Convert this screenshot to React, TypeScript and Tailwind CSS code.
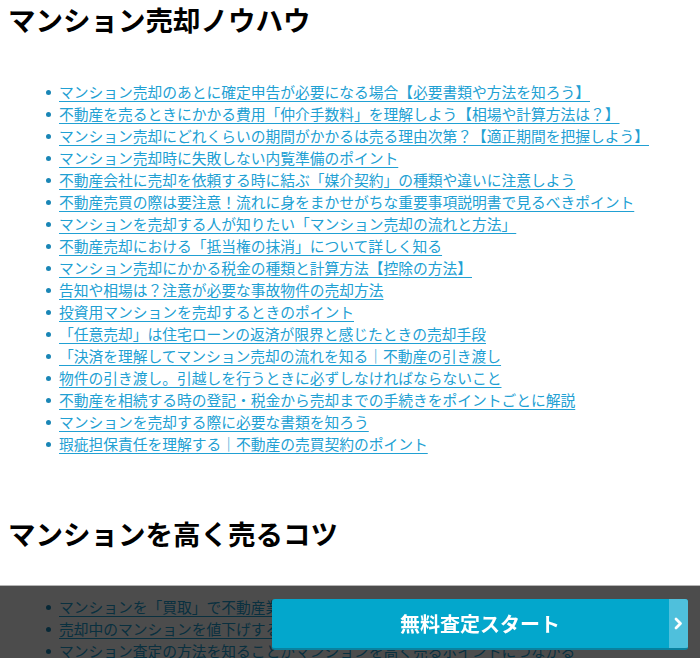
import React from "react";

const knowhowLinks = [
  "マンション売却のあとに確定申告が必要になる場合【必要書類や方法を知ろう】",
  "不動産を売るときにかかる費用「仲介手数料」を理解しよう【相場や計算方法は？】",
  "マンション売却にどれくらいの期間がかかるは売る理由次第？【適正期間を把握しよう】",
  "マンション売却時に失敗しない内覧準備のポイント",
  "不動産会社に売却を依頼する時に結ぶ「媒介契約」の種類や違いに注意しよう",
  "不動産売買の際は要注意！流れに身をまかせがちな重要事項説明書で見るべきポイント",
  "マンションを売却する人が知りたい「マンション売却の流れと方法」",
  "不動産売却における「抵当権の抹消」について詳しく知る",
  "マンション売却にかかる税金の種類と計算方法【控除の方法】",
  "告知や相場は？注意が必要な事故物件の売却方法",
  "投資用マンションを売却するときのポイント",
  "「任意売却」は住宅ローンの返済が限界と感じたときの売却手段",
  "「決済を理解してマンション売却の流れを知る｜不動産の引き渡し",
  "物件の引き渡し。引越しを行うときに必ずしなければならないこと",
  "不動産を相続する時の登記・税金から売却までの手続きをポイントごとに解説",
  "マンションを売却する際に必要な書類を知ろう",
  "瑕疵担保責任を理解する｜不動産の売買契約のポイント",
];

const tipsLinks = [
  "マンションを「買取」で不動産業者に売却するメリットとデメリット",
  "売却中のマンションを値下げするタイミングと注意点",
  "マンション査定の方法を知ることがマンションを高く売るポイントにつながる",
];

const LinkList = ({ items }: { items: string[] }) => (
  <ul className="pl-[38px]">
    {items.map((t) => (
      <li key={t} className="flex items-center h-[22px]">
        <span className="w-[5px] h-[5px] rounded-full bg-[#1a86b6] mr-[8px] shrink-0" />
        <a
          href="#"
          className="whitespace-nowrap text-[#21a0d3] underline underline-offset-[3px] decoration-[1px] leading-[22px]"
        >
          {t}
        </a>
      </li>
    ))}
  </ul>
);

export default function App() {
  return (
    <div
      className="min-h-screen bg-white text-[14.75px] overflow-hidden"
      style={{ fontFamily: '"Noto Sans CJK JP", "Noto Sans", sans-serif' }}
    >
      <div className="pl-[8px]">
        <h2 className="text-[27.5px] font-bold leading-[38px] text-black">マンション売却ノウハウ</h2>
        <div className="mt-[43px]">
          <LinkList items={knowhowLinks} />
        </div>

        <h2 className="mt-[59px] text-[27.5px] font-bold leading-[38px] text-black">マンションを高く売るコツ</h2>
        <div className="mt-[44px]">
          <LinkList items={tipsLinks} />
        </div>
      </div>

      {/* sticky call-to-action bar */}
      <div className="fixed left-0 right-0 bottom-0 h-[73px] bg-black/70 border-t border-[#b5b5b5]">
        <a
          href="#"
          className="absolute left-[272px] right-[12px] top-[13px] h-[51px] flex rounded-[3px] overflow-hidden bg-[#03a7cc] border-b-[2px] border-[#0a819e]"
        >
          <span className="flex-1 flex items-center justify-center pl-[19px] text-white text-[20px] font-bold">
            無料査定スタート
          </span>
          <span className="w-[19px] bg-[#4fc0dc] flex items-center justify-center">
            <svg width="9" height="13" viewBox="0 0 9 13">
              <path d="M2 2l4.5 4.5L2 11" fill="none" stroke="#fff" strokeWidth="2.8" strokeLinecap="round" strokeLinejoin="round" />
            </svg>
          </span>
        </a>
      </div>
    </div>
  );
}
